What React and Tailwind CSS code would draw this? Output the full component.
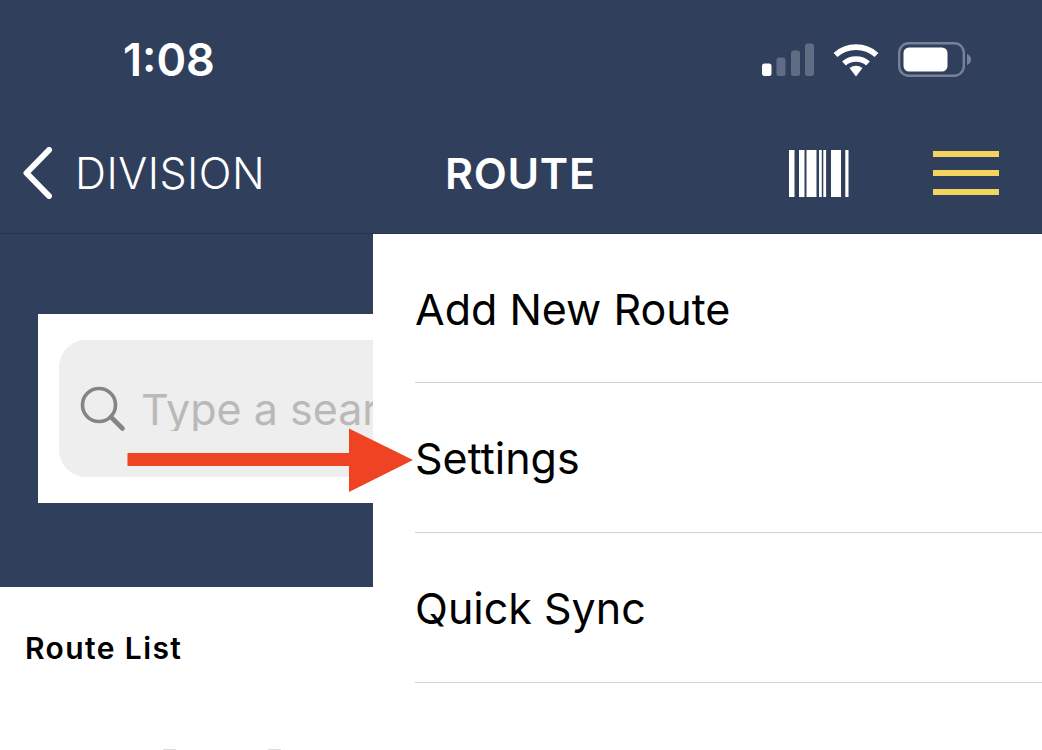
const navy = "bg-[#303f5b]";

function Signal() {
  return (
    <svg width="52" height="34" viewBox="0 0 52 34" className="block">
      <rect x="0" y="20.5" width="9.5" height="12.5" rx="2.5" fill="#fff" />
      <rect x="14.5" y="14.5" width="9" height="18.5" rx="2.5" fill="#5f6c83" />
      <rect x="29" y="7.5" width="9" height="25.5" rx="2.5" fill="#5f6c83" />
      <rect x="43" y="0.5" width="9" height="32.5" rx="2.5" fill="#5f6c83" />
    </svg>
  );
}

function Wifi() {
  return (
    <svg width="46" height="34" viewBox="0 0 46 34" className="block">
      <path d="M2.5 12 C14 1.5 32 1.5 43.5 12" fill="none" stroke="#fff" strokeWidth="5.6" strokeLinecap="butt" />
      <path d="M11 20.5 C17.5 14.5 28.5 14.5 35 20.5" fill="none" stroke="#fff" strokeWidth="5.6" />
      <path d="M16.5 25 Q23 20.5 29.5 25 L23 33.5 Z" fill="#fff" />
    </svg>
  );
}

function Battery() {
  return (
    <svg width="74" height="36" viewBox="0 0 74 36" className="block">
      <rect x="1.2" y="1.2" width="64.6" height="32.6" rx="9.5" fill="none" stroke="#77829a" strokeWidth="2.4" />
      <rect x="5.5" y="5.5" width="44" height="24" rx="5.5" fill="#fff" />
      <path d="M69 12 C72 13 73 15 73 17.5 C73 20 72 22 69 23 Z" fill="#77829a" />
    </svg>
  );
}

function Barcode() {
  const bars = [[0, 5.5], [10, 5.5], [17.5, 10], [30, 2.8], [34.3, 2.8], [42, 10], [56.3, 3.2]];
  return (
    <svg width="60" height="47" viewBox="0 0 60 47" className="block">
      {bars.map(([x, w]) => (
        <rect key={x} x={x} y="0" width={w} height="47" fill="#fff" />
      ))}
    </svg>
  );
}

function Hamburger() {
  return (
    <div className="flex w-[66px] flex-col gap-[13px]">
      <div className="h-[6px] bg-[#f4d35e]" />
      <div className="h-[6px] bg-[#f4d35e]" />
      <div className="h-[6px] bg-[#f4d35e]" />
    </div>
  );
}

function MenuRow({ label }) {
  return (
    <div className="ml-[42px] flex h-[150px] items-center border-b border-[#d2d2d2] pt-[2px] text-[43px] leading-none text-black first:h-[149px]">
      {label}
    </div>
  );
}

export default function App() {
  return (
    <div
      className="relative flex h-[750px] w-[1042px] flex-col overflow-hidden bg-white"
      style={{ fontFamily: "Inter, 'Liberation Sans', sans-serif" }}
    >
      <header className={`${navy} flex h-[234px] shrink-0 flex-col border-b border-[#28344a]`}>
        <div className="flex h-[118px] items-start justify-between pt-[41px] pl-[123px] pr-[70px]">
          <span className="text-[45px] leading-[38px] font-semibold text-white">1:08</span>
          <div className="flex items-center gap-[19px] pt-[1px]">
            <Signal />
            <Wifi />
            <Battery />
          </div>
        </div>
        <div className="flex h-[115px] items-start">
          <div className="flex w-[445px] items-center pl-[23px] pt-[29px]">
            <svg width="30" height="52" viewBox="0 0 30 52" className="block shrink-0">
              <path d="M26 3 L3.5 26 L26 49" fill="none" stroke="#fff" strokeWidth="6" strokeLinecap="round" strokeLinejoin="round" />
            </svg>
            <span className="ml-[22px] text-[43px] leading-none font-light tracking-[0.5px] text-white">DIVISION</span>
          </div>
          <span className="pt-[34px] text-[43px] leading-none font-semibold tracking-[0.7px] text-white">ROUTE</span>
          <div className="ml-auto flex items-start gap-[84px] pt-[32px] pr-[43px]">
            <Barcode />
            <div className="pt-[1px]">
              <Hamburger />
            </div>
          </div>
        </div>
      </header>

      <div className="flex min-h-0 flex-1">
        <div className="flex w-[373px] shrink-0 flex-col">
          <div className={`${navy} h-[353px] pt-[80px] pl-[38px]`}>
            <div className="h-[189px] bg-white pt-[26px] pl-[21px]">
              <div className="flex h-[137px] items-center rounded-l-[27px] bg-[#eeeeee] pl-[21px]">
                <svg width="46" height="46" viewBox="0 0 46 46" className="block shrink-0">
                  <circle cx="19" cy="19" r="16.5" fill="none" stroke="#858585" strokeWidth="3.6" />
                  <path d="M31 31 L42.5 42.5" stroke="#858585" strokeWidth="4.6" strokeLinecap="round" />
                </svg>
                <span className="mt-[1px] ml-[15px] overflow-hidden text-[43px] leading-none font-normal whitespace-nowrap text-[#b9b9b9]">
                  Type a search
                </span>
              </div>
            </div>
          </div>
          <div className="pt-[46px] pl-[25px] text-[30px] leading-none font-semibold tracking-[1.4px] text-black">Route List</div>
          <div className="mt-[86px] flex gap-[92px] pl-[163px]">
            <div className="h-px w-[13px] bg-[#dddddd]" />
            <div className="h-px w-[13px] bg-[#dddddd]" />
          </div>
        </div>
        <div className="min-w-0 flex-1 bg-white">
          <MenuRow label="Add New Route" />
          <MenuRow label="Settings" />
          <MenuRow label="Quick Sync" />
        </div>
      </div>

      <svg width="290" height="66" viewBox="0 0 290 66" className="absolute top-[427px] left-[126px] block">
        <path d="M1.5 26 H223 V1.5 L287 33 L223 65 V39 H1.5 Z" fill="#ee4423" />
      </svg>
    </div>
  );
}
